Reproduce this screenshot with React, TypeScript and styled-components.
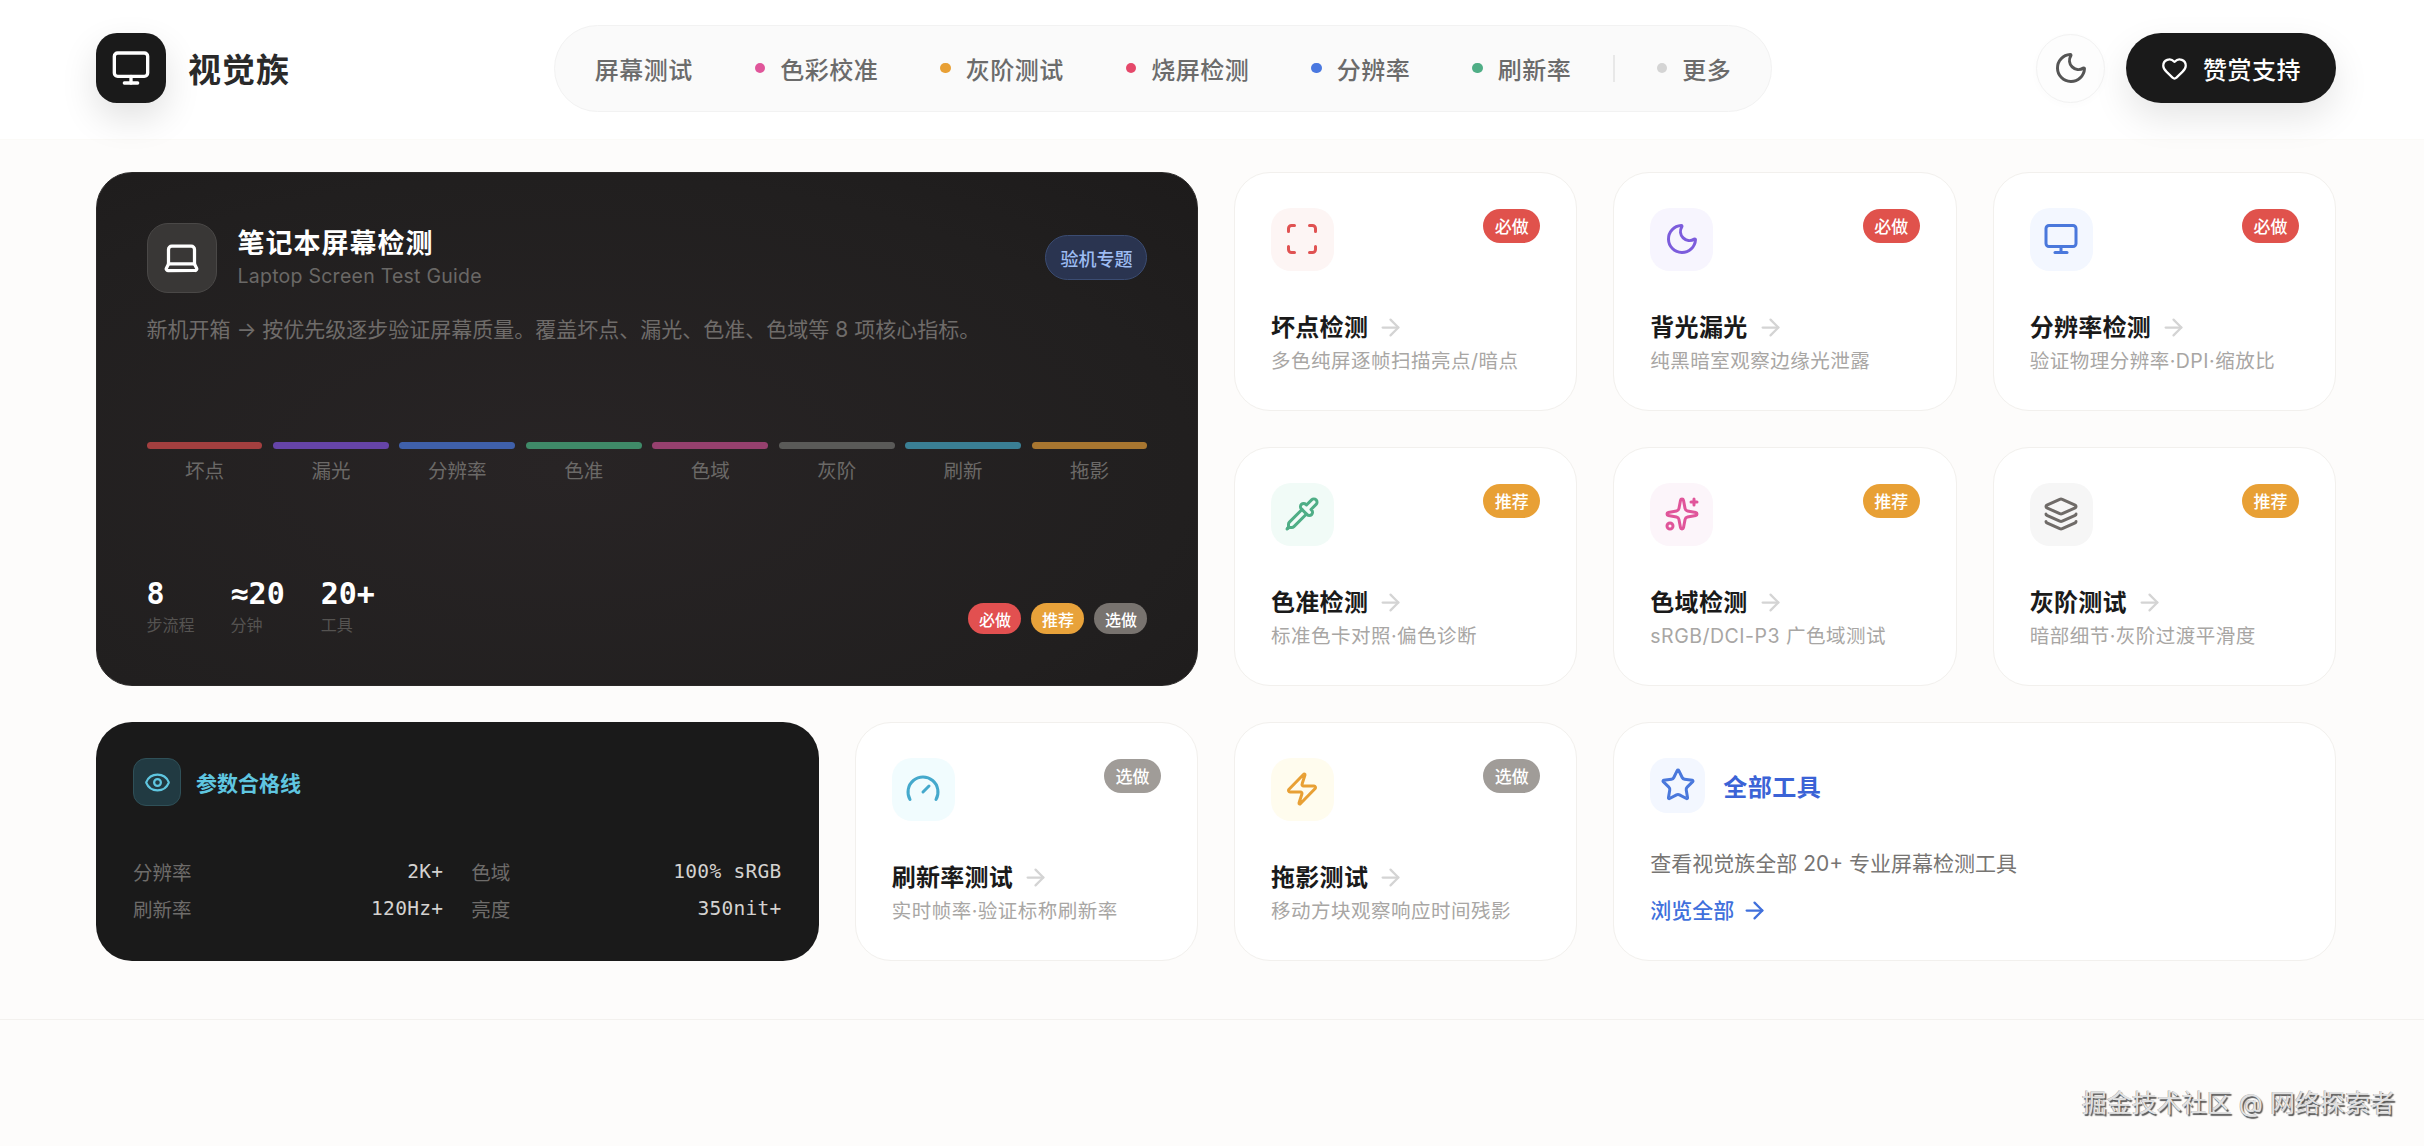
import React from "react"
import styled, { createGlobalStyle } from "styled-components"
import {
  ArrowRight,
  Eye,
  Gauge,
  Heart,
  Laptop,
  Layers,
  Monitor,
  Moon,
  Pipette,
  Scan,
  Sparkles,
  Star,
  Zap,
} from "lucide-react"

const SANS = `Inter, "Noto Sans CJK SC", sans-serif`
const MONO = `"DejaVu Sans Mono", "Liberation Mono", monospace`

const GlobalStyle = createGlobalStyle`
  * { box-sizing: border-box; }
  body {
    margin: 0;
    background: #fdfcfb;
    font-family: ${SANS};
  }
`

const Page = styled.div`
  position: relative;
  display: flex;
  flex-direction: column;
  min-height: 1146px;
`

const Header = styled.header`
  height: 140px;
  padding: 0 88px 3px 96px;
  display: flex;
  align-items: center;
  justify-content: space-between;
  background: #fff;
  border-bottom: 1.5px solid #fbfaf7;
`

const Brand = styled.div`
  display: flex;
  align-items: center;
  gap: 22px;
`

const LogoMark = styled.div`
  width: 70px;
  height: 70px;
  border-radius: 21px;
  background: #1a1a1a;
  color: #fff;
  display: flex;
  align-items: center;
  justify-content: center;
  box-shadow: 0 15px 36px rgba(0, 0, 0, 0.12);
`

const BrandName = styled.span`
  font-size: 33px;
  font-weight: 700;
  letter-spacing: 1px;
  color: #2a2a2a;
`

const Nav = styled.nav`
  height: 87px;
  padding: 0 9px;
  display: flex;
  align-items: center;
  background: #fafafa;
  border: 1.5px solid #f2f2f2;
  border-radius: 44px;
`

const NavItem = styled.a`
  display: flex;
  align-items: center;
  gap: 15px;
  padding: 0 31px;
  font-size: 24px;
  font-weight: 500;
  letter-spacing: 0.5px;
  color: #6b6b6b;
`

const NavDot = styled.i<{ $color: string }>`
  width: 10.5px;
  height: 10.5px;
  border-radius: 50%;
  background: ${(p) => p.$color};
`

const NavDivider = styled.span`
  width: 1.5px;
  height: 27px;
  margin: 0 11px;
  background: #e8e8e8;
`

const Actions = styled.div`
  display: flex;
  align-items: center;
  gap: 21px;
`

const ThemeButton = styled.button`
  width: 69px;
  height: 69px;
  padding: 0;
  border-radius: 50%;
  border: 1.5px solid #f2f2f2;
  background: #fdfdfd;
  color: #555;
  display: flex;
  align-items: center;
  justify-content: center;
  box-shadow: 0 2px 8px rgba(0, 0, 0, 0.02);
`

const SupportButton = styled.button`
  width: 210px;
  height: 70px;
  border: 0;
  border-radius: 35px;
  background: #1a1a1a;
  color: #fff;
  font-family: ${SANS};
  font-size: 24px;
  font-weight: 500;
  letter-spacing: 0.5px;
  display: flex;
  align-items: center;
  justify-content: center;
  gap: 15px;
  box-shadow: 0 15px 36px rgba(0, 0, 0, 0.1);
`

const Main = styled.main`
  padding: 32px 88px 58px 96px;
  display: grid;
  grid-template-columns: repeat(6, 343.33px);
  grid-auto-rows: 239px;
  gap: 36px;
`

const Hero = styled.section`
  grid-column: span 3;
  grid-row: span 2;
  padding: 49.5px 49.5px 46.5px;
  border-radius: 36px;
  border: 1.5px solid #2a2827;
  background: radial-gradient(ellipse at 42% 58%, #282425 0%, #211f1f 70%, #1d1b1b 100%);
  display: flex;
  flex-direction: column;
`

const HeroHead = styled.div`
  display: flex;
  align-items: center;
  gap: 21px;
`

const HeroIcon = styled.div`
  width: 70px;
  height: 70px;
  border-radius: 21px;
  border: 1.5px solid #4a4847;
  background: #393736;
  color: #fff;
  display: flex;
  align-items: center;
  justify-content: center;
`

const HeroTitles = styled.div`
  flex: 1;
`

const HeroTitle = styled.h2`
  margin: 0;
  font-size: 27px;
  line-height: 36px;
  font-weight: 600;
  letter-spacing: 1px;
  color: #fff;
`

const HeroSub = styled.p`
  margin: 0;
  font-size: 19.5px;
  line-height: 28px;
  letter-spacing: 0.25px;
  color: #6a6866;
`

const TopicBadge = styled.span`
  height: 45px;
  padding: 0 14px;
  display: flex;
  align-items: center;
  border-radius: 23px;
  border: 1.5px solid #3b4c72;
  background: #2a3450;
  font-size: 18px;
  font-weight: 500;
  color: #9dbcf2;
`

const HeroDesc = styled.p`
  margin: 21.5px 0 0;
  font-size: 21px;
  line-height: 32px;
  color: #6f6c6a;
`

const BarRow = styled.div`
  margin-top: 96px;
  display: grid;
  grid-template-columns: repeat(8, 1fr);
  gap: 10.5px;
`

const BarCell = styled.div`
  display: flex;
  flex-direction: column;
  align-items: center;
  gap: 8px;
`

const Bar = styled.i<{ $color: string }>`
  width: 100%;
  height: 7px;
  border-radius: 3.5px;
  background: ${(p) => p.$color};
`

const BarLabel = styled.span`
  font-size: 19.5px;
  line-height: 28px;
  color: #6b6967;
`

const HeroFoot = styled.div`
  margin-top: auto;
  display: flex;
  align-items: flex-end;
  justify-content: space-between;
`

const Stats = styled.div`
  display: flex;
  gap: 36px;
`

const Stat = styled.div`
  display: flex;
  flex-direction: column;
`

const StatNum = styled.span`
  font-family: ${MONO};
  font-size: 30px;
  line-height: 36px;
  font-weight: 700;
  color: #fff;
`

const StatLabel = styled.span`
  font-size: 16px;
  line-height: 27px;
  color: #555351;
`

const Legend = styled.div`
  display: flex;
  gap: 10px;
  margin-bottom: 4.5px;
`

const LegendPill = styled.span<{ $color: string }>`
  width: 53px;
  height: 31px;
  border-radius: 16px;
  background: ${(p) => p.$color};
  color: #fff;
  font-size: 16px;
  font-weight: 500;
  display: flex;
  align-items: center;
  justify-content: center;
`

const ParamCard = styled.section`
  grid-column: span 2;
  padding: 36px 37px;
  border-radius: 36px;
  background: #1a1a1a;
  display: flex;
  flex-direction: column;
`

const ParamHead = styled.div`
  display: flex;
  align-items: center;
  gap: 15px;
`

const ParamIcon = styled.div`
  width: 48px;
  height: 48px;
  border-radius: 13px;
  border: 1.5px solid #2f5058;
  background: #213a42;
  color: #5fc6e0;
  display: flex;
  align-items: center;
  justify-content: center;
`

const ParamTitle = styled.span`
  font-size: 21px;
  font-weight: 600;
  color: #5fc6e0;
`

const ParamGrid = styled.div`
  margin-top: auto;
  margin-bottom: 3px;
  display: grid;
  grid-template-columns: 1fr 1fr;
  gap: 9px 28px;
`

const ParamRow = styled.div`
  display: flex;
  align-items: center;
  justify-content: space-between;
  height: 28px;
`

const ParamKey = styled.span`
  font-size: 19.5px;
  color: #6e6c6a;
`

const ParamValue = styled.span`
  font-family: ${MONO};
  font-size: 19.5px;
  letter-spacing: 0.3px;
  color: #d4d2d0;
`

const Card = styled.a`
  padding: 34.5px 34.5px 34.5px 36px;
  border-radius: 36px;
  border: 1.5px solid #f2f0ed;
  background: #fff;
  display: flex;
  flex-direction: column;
`

const CardTop = styled.div`
  display: flex;
  align-items: flex-start;
  justify-content: space-between;
  margin-bottom: 39px;
  margin-right: 1.5px;
`

const IconTile = styled.div<{ $bg: string; $fg: string }>`
  width: 63px;
  height: 63px;
  border-radius: 20px;
  background: ${(p) => p.$bg};
  color: ${(p) => p.$fg};
  display: flex;
  align-items: center;
  justify-content: center;
`

const Badge = styled.span<{ $color: string }>`
  width: 57px;
  height: 34px;
  margin-top: 1px;
  border-radius: 17px;
  background: ${(p) => p.$color};
  color: #fff;
  font-size: 17px;
  font-weight: 500;
  display: flex;
  align-items: center;
  justify-content: center;
`

const CardTitle = styled.div`
  display: flex;
  align-items: center;
  gap: 9px;
  font-size: 24px;
  line-height: 36px;
  font-weight: 600;
  letter-spacing: 0.3px;
  color: #1a1a1a;
  svg {
    color: #d4d4d4;
  }
`

const CardSub = styled.div`
  margin-top: 1.5px;
  font-size: 19.5px;
  line-height: 29px;
  letter-spacing: 0.5px;
  color: #a8a6a4;
`

const AllCard = styled(Card)`
  grid-column: span 2;
`

const AllHead = styled.div`
  display: flex;
  align-items: center;
  gap: 18px;
  margin-bottom: 35px;
`

const AllTile = styled(IconTile)`
  width: 55px;
  height: 55px;
  border-radius: 17px;
`

const AllTitle = styled.span`
  font-size: 24px;
  font-weight: 600;
  letter-spacing: 0.5px;
  color: #3b63d6;
`

const AllDesc = styled.p`
  margin: 0;
  font-size: 21px;
  line-height: 32px;
  color: #777573;
`

const AllLink = styled.div`
  margin-top: 15px;
  display: flex;
  align-items: center;
  gap: 7px;
  font-size: 21px;
  line-height: 32px;
  font-weight: 500;
  color: #4070dc;
`

const Footer = styled.footer`
  flex: 1;
  border-top: 1.5px solid #f3f1ee;
`

const Watermark = styled.span`
  position: absolute;
  right: 29px;
  bottom: 26px;
  font-size: 25px;
  line-height: 34px;
  color: #e2e2e2;
  text-shadow: 1.5px 1.5px 1px #555, -0.5px -0.5px 0.5px #999;
`

const RED = "#e0524c"
const ORANGE = "#e8a035"
const GRAY = "#a09c98"

const navItems = [
  { label: "色彩校准", dot: "#e0559a" },
  { label: "灰阶测试", dot: "#e8a035" },
  { label: "烧屏检测", dot: "#e5486a" },
  { label: "分辨率", dot: "#4a78e0" },
  { label: "刷新率", dot: "#4fae86" },
]

const bars = [
  { label: "坏点", color: "#a33f3f" },
  { label: "漏光", color: "#6644a8" },
  { label: "分辨率", color: "#3f60aa" },
  { label: "色准", color: "#3f8a68" },
  { label: "色域", color: "#96406e" },
  { label: "灰阶", color: "#5a5a58" },
  { label: "刷新", color: "#3a7f94" },
  { label: "拖影", color: "#a87630" },
]

const stats = [
  { num: "8", label: "步流程" },
  { num: "≈20", label: "分钟" },
  { num: "20+", label: "工具" },
]

const params = [
  { key: "分辨率", value: "2K+" },
  { key: "色域", value: "100% sRGB" },
  { key: "刷新率", value: "120Hz+" },
  { key: "亮度", value: "350nit+" },
]

type Tool = {
  title: string
  sub: string
  badge: string
  color: string
  bg: string
  fg: string
  icon: React.ElementType
}

const tool = (
  title: string,
  sub: string,
  badge: string,
  color: string,
  bg: string,
  fg: string,
  icon: React.ElementType,
): Tool => ({ title, sub, badge, color, bg, fg, icon })

const topTools = [
  tool("坏点检测", "多色纯屏逐帧扫描亮点/暗点", "必做", RED, "#fdf5f4", "#e05252", Scan),
  tool("背光漏光", "纯黑暗室观察边缘光泄露", "必做", RED, "#f7f5fe", "#7c5cdc", Moon),
  tool("分辨率检测", "验证物理分辨率·DPI·缩放比", "必做", RED, "#f3f7ff", "#4a78dc", Monitor),
  tool("色准检测", "标准色卡对照·偏色诊断", "推荐", ORANGE, "#f1fbf7", "#4fae86", Pipette),
  tool("色域检测", "sRGB/DCI-P3 广色域测试", "推荐", ORANGE, "#fcf5fa", "#e0559a", Sparkles),
  tool("灰阶测试", "暗部细节·灰阶过渡平滑度", "推荐", ORANGE, "#f6f6f6", "#6f6b68", Layers),
]

const refreshTool = tool("刷新率测试", "实时帧率·验证标称刷新率", "选做", GRAY, "#f1fcfe", "#45a9cc", Gauge)
const ghostTool = tool("拖影测试", "移动方块观察响应时间残影", "选做", GRAY, "#fffcee", "#e8a035", Zap)

const ToolCard = ({ item }: { item: Tool }) => {
  const Icon = item.icon
  return (
    <Card>
      <CardTop>
        <IconTile $bg={item.bg} $fg={item.fg}>
          <Icon size={36} strokeWidth={2} />
        </IconTile>
        <Badge $color={item.color}>{item.badge}</Badge>
      </CardTop>
      <CardTitle>
        {item.title}
        <ArrowRight size={27} strokeWidth={2} />
      </CardTitle>
      <CardSub>{item.sub}</CardSub>
    </Card>
  )
}

export default function App() {
  return (
    <Page>
      <GlobalStyle />
      <Header>
        <Brand>
          <LogoMark>
            <Monitor size={40} strokeWidth={2} />
          </LogoMark>
          <BrandName>视觉族</BrandName>
        </Brand>
        <Nav>
          <NavItem>屏幕测试</NavItem>
          {navItems.map((n) => (
            <NavItem key={n.label}>
              <NavDot $color={n.dot} />
              {n.label}
            </NavItem>
          ))}
          <NavDivider />
          <NavItem>
            <NavDot $color="#d4d4d4" />
            更多
          </NavItem>
        </Nav>
        <Actions>
          <ThemeButton>
            <Moon size={36} strokeWidth={2} />
          </ThemeButton>
          <SupportButton>
            <Heart size={27} strokeWidth={2} />
            赞赏支持
          </SupportButton>
        </Actions>
      </Header>

      <Main>
        <Hero>
          <HeroHead>
            <HeroIcon>
              <Laptop size={39} strokeWidth={2} />
            </HeroIcon>
            <HeroTitles>
              <HeroTitle>笔记本屏幕检测</HeroTitle>
              <HeroSub>Laptop Screen Test Guide</HeroSub>
            </HeroTitles>
            <TopicBadge>验机专题</TopicBadge>
          </HeroHead>
          <HeroDesc>新机开箱 → 按优先级逐步验证屏幕质量。覆盖坏点、漏光、色准、色域等 8 项核心指标。</HeroDesc>
          <BarRow>
            {bars.map((b) => (
              <BarCell key={b.label}>
                <Bar $color={b.color} />
                <BarLabel>{b.label}</BarLabel>
              </BarCell>
            ))}
          </BarRow>
          <HeroFoot>
            <Stats>
              {stats.map((s) => (
                <Stat key={s.label}>
                  <StatNum>{s.num}</StatNum>
                  <StatLabel>{s.label}</StatLabel>
                </Stat>
              ))}
            </Stats>
            <Legend>
              <LegendPill $color="#e25050">必做</LegendPill>
              <LegendPill $color="#e8a23a">推荐</LegendPill>
              <LegendPill $color="#78736f">选做</LegendPill>
            </Legend>
          </HeroFoot>
        </Hero>

        {topTools.map((t) => (
          <ToolCard key={t.title} item={t} />
        ))}

        <ParamCard>
          <ParamHead>
            <ParamIcon>
              <Eye size={27} strokeWidth={2} />
            </ParamIcon>
            <ParamTitle>参数合格线</ParamTitle>
          </ParamHead>
          <ParamGrid>
            {params.map((p) => (
              <ParamRow key={p.key}>
                <ParamKey>{p.key}</ParamKey>
                <ParamValue>{p.value}</ParamValue>
              </ParamRow>
            ))}
          </ParamGrid>
        </ParamCard>

        <ToolCard item={refreshTool} />
        <ToolCard item={ghostTool} />

        <AllCard>
          <AllHead>
            <AllTile $bg="#f3f7ff" $fg="#4a78dc">
              <Star size={36} strokeWidth={2} />
            </AllTile>
            <AllTitle>全部工具</AllTitle>
          </AllHead>
          <AllDesc>查看视觉族全部 20+ 专业屏幕检测工具</AllDesc>
          <AllLink>
            浏览全部
            <ArrowRight size={27} strokeWidth={2} />
          </AllLink>
        </AllCard>
      </Main>

      <Footer />
      <Watermark>掘金技术社区 @ 网络探索者</Watermark>
    </Page>
  )
}
